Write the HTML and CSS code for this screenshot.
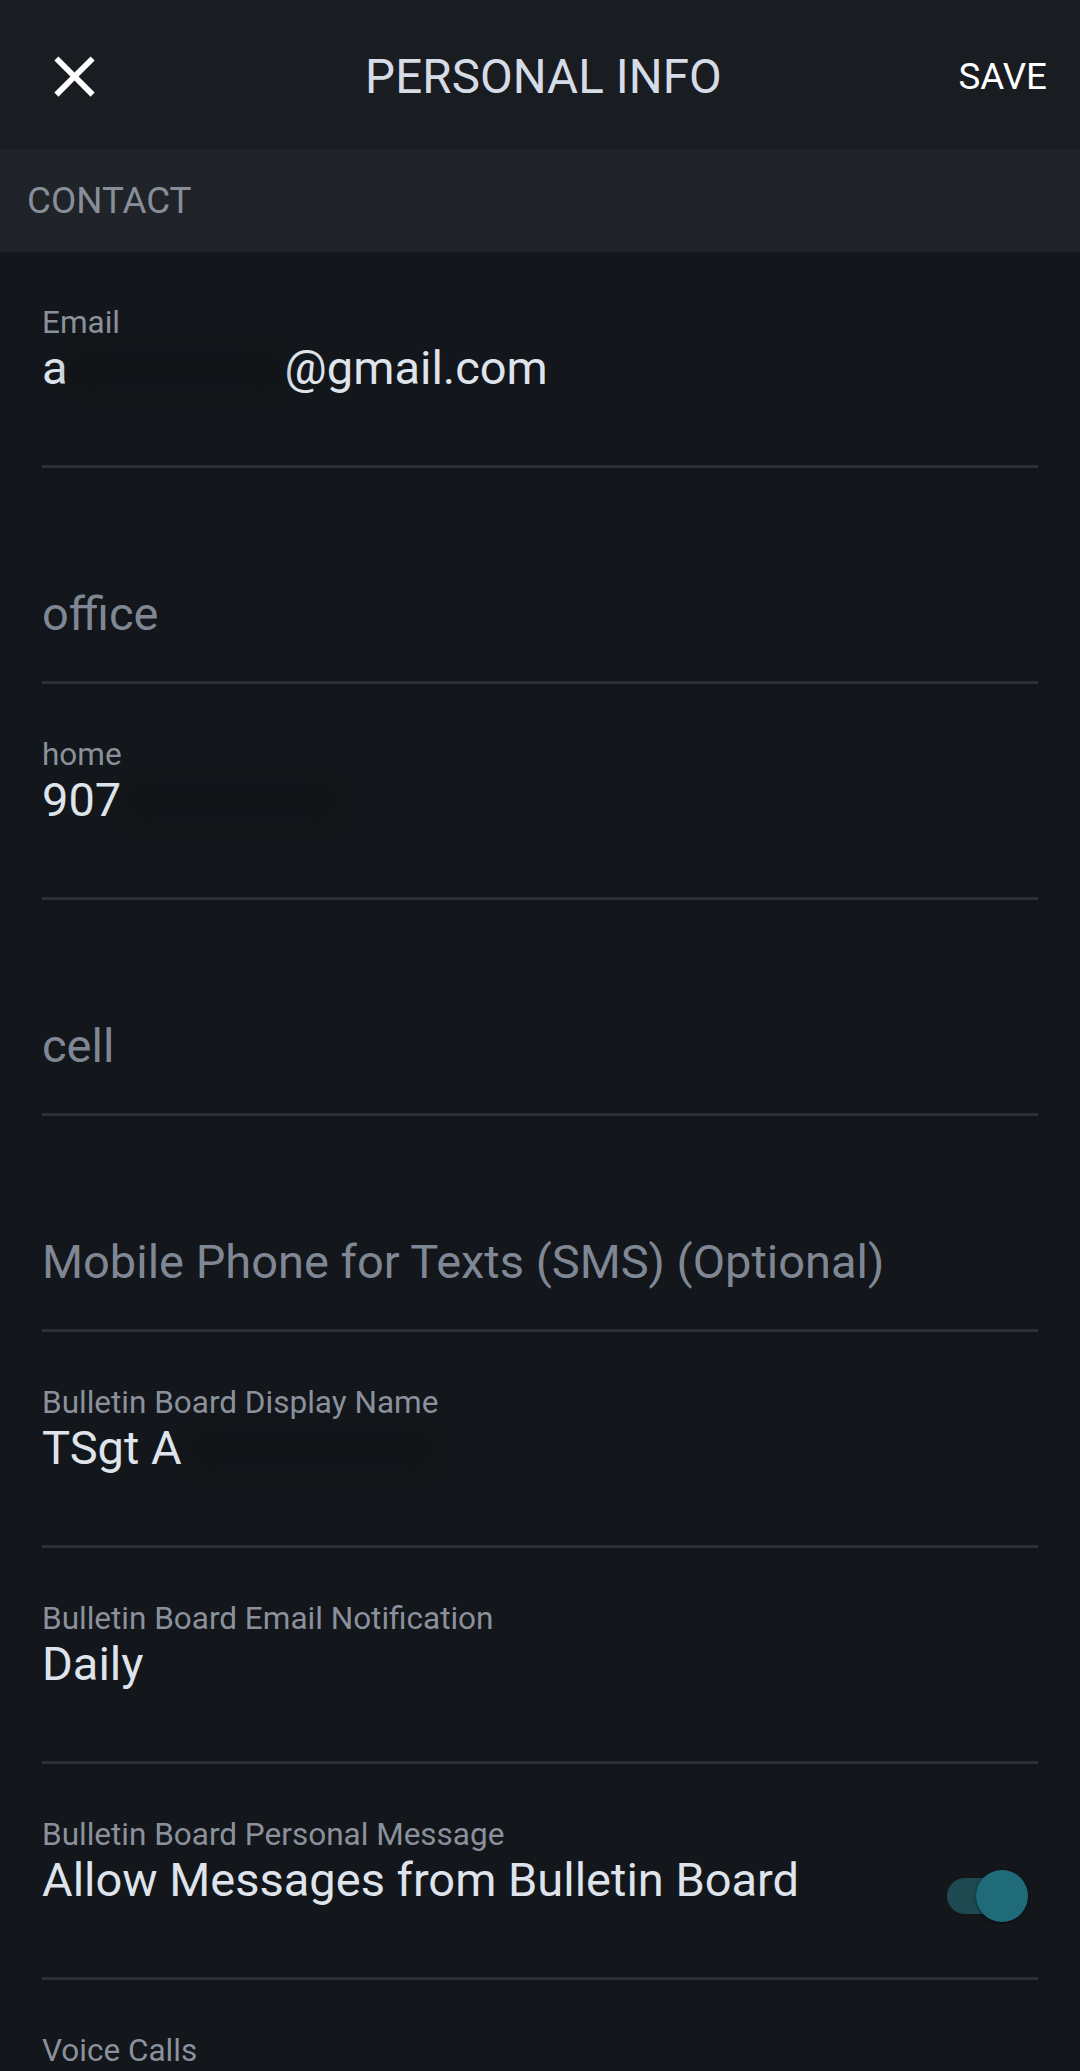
FILE: index.html
```html
<!DOCTYPE html>
<html lang="en">
<head>
<meta charset="utf-8">
<title>Personal Info</title>
<link rel="stylesheet" href="styles.css">
</head>
<body>
<div class="screen">
  <header class="topbar">
    <button class="close" aria-label="Close">
      <svg width="69" height="69" viewBox="0 0 24 24"><path fill="#ffffff" d="M19 6.41L17.59 5 12 10.59 6.41 5 5 6.41 10.59 12 5 17.59 6.41 19 12 13.41 17.59 19 19 17.59 13.41 12z"/></svg>
    </button>
    <h1 class="title">PERSONAL INFO</h1>
    <button class="save">SAVE</button>
  </header>

  <div class="section">CONTACT</div>

  <div class="fields">
    <div class="field">
      <div class="label">Email</div>
      <div class="value">a<span class="redact redact-email"></span>@gmail.com</div>
    </div>
    <div class="field field-empty">
      <div class="hint">office</div>
    </div>
    <div class="field">
      <div class="label">home</div>
      <div class="value">907<span class="redact redact-phone"></span></div>
    </div>
    <div class="field field-empty">
      <div class="hint">cell</div>
    </div>
    <div class="field field-empty">
      <div class="hint">Mobile Phone for Texts (SMS) (Optional)</div>
    </div>
    <div class="field">
      <div class="label">Bulletin Board Display Name</div>
      <div class="value">TSgt A<span class="redact redact-name"></span></div>
    </div>
    <div class="field">
      <div class="label">Bulletin Board Email Notification</div>
      <div class="value">Daily</div>
    </div>
    <div class="field">
      <div class="label">Bulletin Board Personal Message</div>
      <div class="value value-row">
        <span>Allow Messages from Bulletin Board</span>
        <span class="switch" role="switch" aria-checked="true">
          <span class="switch-track"></span>
          <span class="switch-thumb"></span>
        </span>
      </div>
    </div>
    <div class="field field-last">
      <div class="label">Voice Calls</div>
    </div>
  </div>
</div>
</body>
</html>
```

FILE: styles.css
```css
* { box-sizing: border-box; }

html, body {
  margin: 0;
  padding: 0;
  background: #13161a;
}

body {
  font-family: Roboto, "Noto Sans", "Liberation Sans", sans-serif;
  width: 1080px;
  height: 2071px;
  overflow: hidden;
}

.screen {
  width: 1080px;
  min-height: 2071px;
  background: #13161a;
}

.topbar {
  height: 149px;
  padding: 4px 33px 0 40px;
  background: #191c21;
  display: grid;
  grid-template-columns: 1fr auto 1fr;
  align-items: center;
}

.close {
  justify-self: start;
  background: none;
  border: 0;
  padding: 0;
  width: 69px;
  height: 69px;
  display: flex;
}

.title {
  margin: 0;
  font-weight: 400;
  font-size: 47.5px;
  line-height: 56px;
  color: #d6dce6;
  letter-spacing: 0.1px;
}

.save {
  justify-self: end;
  background: none;
  border: 0;
  padding: 0;
  font-family: inherit;
  font-size: 36.75px;
  line-height: 44px;
  font-weight: 400;
  color: #ffffff;
}

.section {
  height: 103px;
  padding-left: 27px;
  display: flex;
  align-items: center;
  background: #202328;
  font-size: 36.75px;
  color: #868e9a;
}

.fields {
  padding: 0 42px;
}

.field {
  height: 216px;
  padding-top: 53px;
  border-bottom: 3px solid #2c3036;
}

.field-empty {
  padding-top: 119px;
}

.field-last {
  height: auto;
  border-bottom: 0;
}

.label {
  font-size: 31.5px;
  line-height: 36px;
  color: #8a919c;
}

.value {
  font-size: 47px;
  line-height: 54px;
  color: #dfe4ec;
  white-space: nowrap;
}

.hint {
  font-size: 47px;
  line-height: 54px;
  color: #7f8794;
  white-space: nowrap;
}

.redact {
  display: inline-block;
  height: 40px;
  vertical-align: -6px;
  background: #101317;
  border-radius: 20px;
  filter: blur(8px);
  opacity: 0.7;
}

.redact-email { width: 212px; margin: 0 3px 0 2px; }
.redact-phone { width: 210px; margin-left: 6px; }
.redact-name { width: 240px; margin-left: 10px; }

.value-row {
  display: flex;
  justify-content: space-between;
  align-items: flex-start;
}

.switch {
  position: relative;
  width: 81px;
  height: 52px;
  margin-top: 17px;
  margin-right: 10px;
  flex: none;
}

.switch-track {
  position: absolute;
  left: 0;
  top: 8px;
  width: 74px;
  height: 36px;
  border-radius: 18px;
  background: #1e4950;
}

.switch-thumb {
  position: absolute;
  right: 0;
  top: 0;
  width: 52px;
  height: 52px;
  border-radius: 50%;
  background: #1f6b79;
  box-shadow: 0 1px 3px rgba(0, 0, 0, 0.5);
}
```
